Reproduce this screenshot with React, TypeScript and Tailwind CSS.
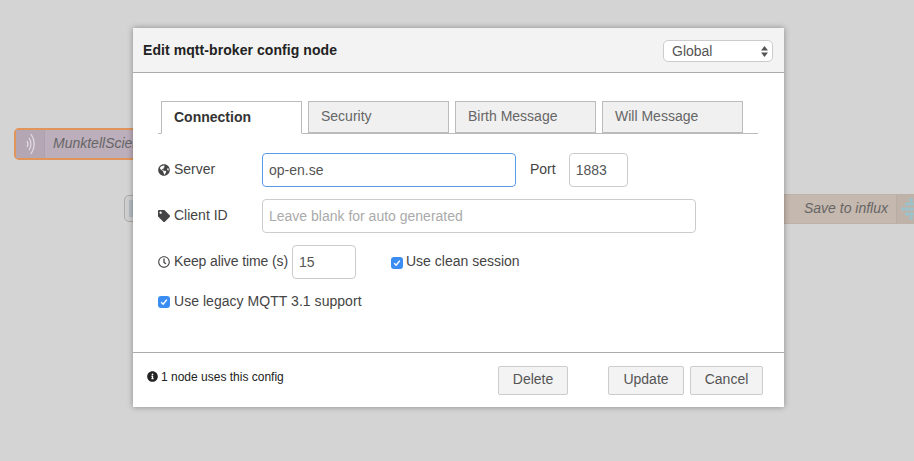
import { FaGlobeAmericas, FaTag, FaRegClock, FaInfoCircle } from "react-icons/fa"

function Tab({ label, active }: { label: string; active?: boolean }) {
  if (active) {
    return (
      <div className="w-[141px] h-[33px] -mb-px border border-[#bbb] border-b-white bg-white pl-[12px] pt-[5px] text-[14px] font-bold text-[#333]">
        {label}
      </div>
    )
  }
  return (
    <div className="w-[141px] h-[32px] border border-[#bbb] bg-[#f0f0f0] pl-[12px] pt-[4px] text-[14px] text-[#666]">
      {label}
    </div>
  )
}

function Checkbox() {
  return (
    <span className="w-[12px] h-[12px] mt-[1px] rounded-[3px] bg-[#3a8df2] flex items-center justify-center shrink-0">
      <svg width="8" height="8" viewBox="0 0 8 8" fill="none">
        <path d="M1.2 4.2 L3.2 6.2 L6.8 1.6" stroke="white" strokeWidth="1.5" />
      </svg>
    </span>
  )
}

function Btn({ label, className }: { label: string; className: string }) {
  return (
    <div className={`h-[29px] pb-[2px] border border-[#ccc] rounded-[2px] bg-[#f3f3f3] text-[14px] text-[#555] flex items-center justify-center ${className}`}>
      {label}
    </div>
  )
}

export default function App() {
  return (
    <div className="relative w-[914px] h-[461px] overflow-hidden bg-[#d4d4d4] font-['Liberation_Sans',Arial,sans-serif]">
      {/* nodes on the canvas behind the dialog */}
      <div className="absolute left-[14px] top-[128px] w-[160px] h-[32px] rounded-[5px] border-2 border-[#e2955a] bg-[#bcaebb] flex items-center">
        <div className="w-[29px] h-full bg-[#b5a6b4] border-r border-[#b0a0af] flex items-center justify-center">
          <svg width="14" height="24" viewBox="0 0 14 24" fill="none" stroke="#e4dde3" strokeWidth="1.2">
            <path d="M4 9 Q6 12 4 15" />
            <path d="M6 6 Q10 12 6 18" />
            <path d="M8 2 Q14.5 12 8 22" />
          </svg>
        </div>
        <span className="ml-[8px] pb-[2px] text-[14px] italic text-[#666]">MunktellScience</span>
      </div>
      <div className="absolute left-[124px] top-[195px] w-[20px] h-[27px] rounded-[5px] border border-[#aaa] bg-[#cfcfcf] flex items-center pl-[4px]">
        <div className="w-[8px] h-[17px] bg-[#b4bcc4]" />
      </div>
      <div className="absolute left-[760px] top-[194px] w-[160px] h-[30px] bg-[#c5b8ae] border-y border-[#bdb1a8] flex items-center justify-end">
        <span className="text-[14px] italic text-[#666] mr-[8px] pb-[2px]">Save to influx</span>
        <div className="w-[24px] h-full bg-[#bfb2a8] border-l border-[#b9aca2] flex items-center pl-[3px]">
          <svg width="22" height="24" viewBox="0 0 22 24" fill="#9cc3cc" className="shrink-0">
            <circle cx="11" cy="3" r="2" />
            <circle cx="7" cy="7" r="2" />
            <circle cx="11" cy="7" r="2" />
            <circle cx="15" cy="7" r="2" />
            <circle cx="3" cy="12" r="2" />
            <circle cx="7" cy="12" r="2" />
            <circle cx="11" cy="12" r="2" />
            <circle cx="15" cy="12" r="2" />
            <circle cx="7" cy="17" r="2" />
            <circle cx="11" cy="17" r="2" />
            <circle cx="15" cy="17" r="2" />
            <circle cx="11" cy="21" r="2" />
          </svg>
        </div>
      </div>

      {/* dialog */}
      <div className="absolute left-[133px] top-[28px] w-[651px] h-[379px] bg-white shadow-[0_0_6px_rgba(0,0,0,0.35)] flex flex-col">
        <div className="h-[45px] shrink-0 bg-[#f3f3f3] border-b border-[#aaa] flex items-center justify-between pl-[10px] pr-[11px]">
          <span className="text-[14px] font-bold text-[#222] tracking-[0.07px]">Edit mqtt-broker config node</span>
          <div className="w-[110px] h-[22px] mt-[1px] pt-[2px] rounded-[5px] border border-[#ccc] bg-white flex items-center justify-between pl-[8px] pr-[4px] text-[14px] text-[#555]">
            Global
            <svg width="7" height="11" viewBox="0 0 7 11" fill="#555">
              <path d="M3.5 0 L7 4.5 H0 Z M0 6.5 H7 L3.5 11 Z" />
            </svg>
          </div>
        </div>

        <div className="flex-1 pl-[25px] pt-[28px]">
          <div className="w-[600px] h-[33px] border-b border-[#bbb] pl-[3px] flex items-start gap-[6px]">
            <Tab label="Connection" active />
            <Tab label="Security" />
            <Tab label="Birth Message" />
            <Tab label="Will Message" />
          </div>

          <div className="mt-[19px] h-[34px] flex items-center text-[14px] text-[#444]">
            <div className="w-[104px] flex items-center gap-[4px]">
              <FaGlobeAmericas className="w-[12px] h-[12px] text-[#444]" />
              <span className="pb-[2px]">Server</span>
            </div>
            <div className="w-[254px] h-[34px] rounded-[4px] border border-[#5a9be8] px-[6px] flex items-center text-[#555]">op-en.se</div>
            <span className="ml-[14px] pb-[2px]">Port</span>
            <div className="ml-[13px] w-[59px] h-[34px] rounded-[4px] border border-[#ccc] px-[6px] flex items-center text-[#555]">1883</div>
          </div>

          <div className="mt-[12px] h-[34px] flex items-center text-[14px] text-[#444]">
            <div className="w-[104px] flex items-center gap-[4px]">
              <FaTag className="w-[12px] h-[12px] text-[#444]" />
              <span className="pb-[2px]">Client ID</span>
            </div>
            <div className="w-[434px] h-[34px] rounded-[4px] border border-[#ccc] px-[6px] flex items-center text-[#aaa]">Leave blank for auto generated</div>
          </div>

          <div className="mt-[12px] h-[34px] flex items-center text-[14px] text-[#444]">
            <div className="w-[134px] flex items-center gap-[4px]">
              <FaRegClock className="w-[12px] h-[12px] text-[#444] shrink-0" />
              <span className="pb-[2px] whitespace-nowrap tracking-[-0.1px]">Keep alive time (s)</span>
            </div>
            <div className="w-[64px] h-[34px] rounded-[4px] border border-[#ccc] px-[6px] flex items-center text-[#555]">15</div>
            <div className="ml-[35px] flex items-center gap-[3px]">
              <Checkbox />
              <span className="pb-[2px]">Use clean session</span>
            </div>
          </div>

          <div className="mt-[12px] flex items-center gap-[4px] text-[14px] text-[#444]">
            <Checkbox />
            <span className="tracking-[0.04px]">Use legacy MQTT 3.1 support</span>
          </div>
        </div>

        <div className="h-[55px] shrink-0 border-t border-[#aaa] flex items-center pl-[14px] pr-[21px]">
          <div className="flex items-center gap-[3px] text-[12px] text-[#222] -mt-[7px]">
            <FaInfoCircle className="w-[11px] h-[11px] text-[#222]" />
            <span>1 node uses this config</span>
          </div>
          <div className="ml-auto flex items-center">
            <Btn label="Delete" className="w-[70px]" />
            <Btn label="Update" className="w-[76px] ml-[40px]" />
            <Btn label="Cancel" className="w-[73px] ml-[6px]" />
          </div>
        </div>
      </div>
    </div>
  )
}
